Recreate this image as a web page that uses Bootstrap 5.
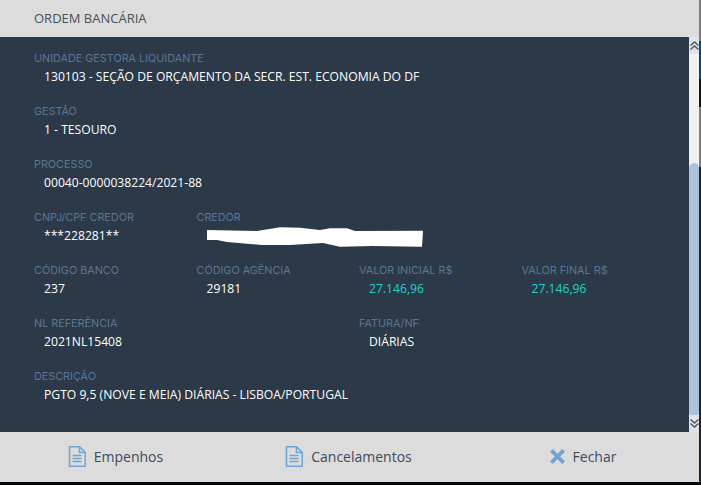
<!DOCTYPE html>
<html lang="pt-BR">
<head>
  <meta charset="UTF-8" />
  <meta name="viewport" content="width=device-width, initial-scale=1" />
  <title>Ordem Bancária</title>
  <link href="https://cdn.jsdelivr.net/npm/bootstrap@5.3.3/dist/css/bootstrap.min.css" rel="stylesheet" />
  <style>
  html, body { height: 100%; overflow: hidden; }
  body {
    background: #06090c;
    font-family: "Open Sans", "Liberation Sans", sans-serif;
  }
  .janela { width: 699px; height: 482px; background: #dcdcdc; }
  .faixa-direita {
    width: 2px; height: 482px;
    background: linear-gradient(#7d7d7d 0 41px, #0c4668 41px 79px, #101418 79px 107px, #7d7d7d 107px 167px, #1a2430 167px 485px);
  }
  .topo { height: 37px; padding-left: 34px; font-size: 13px; color: #4a4f57; }
  .miolo { height: 395px; }
  .conteudo { background: #2b3949; padding: 14px 5px 0 34px; }
  .campo { height: 53px; }
  .rotulo {
    font-family: "Inter", "Liberation Sans", sans-serif;
    font-size: 10.8px; line-height: 16px; color: #5d7694;
  }
  .valor { font-size: 12.15px; line-height: 18px; color: #fff; padding: 1px 0 0 10px; }
  .valor-teal { color: #22d3cb; }
  .risco { display: block; width: 217px; height: 20px; }
  .barra { width: 10px; background: #f1f1f1; }
  .barra-botao { height: 17px; background: #e0e4e9; }
  .barra-folga { height: 109px; }
  .barra-polegar { background: #adc3da; border-radius: 5px 5px 2px 2px; }
  .rodape { height: 50px; }
  .acao { font-size: 14px; color: #3f4a5b; gap: 8px; padding-bottom: 2px; }
  .acao-doc { padding-right: 2px; }
  .acao-fechar { padding-left: 1px; }
  </style>
</head>
<body>
  <div class="d-flex">
    <div class="janela d-flex flex-column">
      <!-- Título -->
      <div class="topo d-flex align-items-center">ORDEM BANCÁRIA</div>

      <div class="miolo d-flex">
        <div class="conteudo flex-grow-1">
          <div class="campo">
            <div class="rotulo">UNIDADE GESTORA LIQUIDANTE</div>
            <div class="valor">130103 - SEÇÃO DE ORÇAMENTO DA SECR. EST. ECONOMIA DO DF</div>
          </div>
          <div class="campo">
            <div class="rotulo">GESTÃO</div>
            <div class="valor">1 - TESOURO</div>
          </div>
          <div class="campo">
            <div class="rotulo">PROCESSO</div>
            <div class="valor">00040-0000038224/2021-88</div>
          </div>
          <div class="row g-0 campo">
            <div class="col-3">
              <div class="rotulo">CNPJ/CPF CREDOR</div>
              <div class="valor">***228281**</div>
            </div>
            <div class="col-9">
              <div class="rotulo">CREDOR</div>
              <div class="valor">
                <svg class="risco" viewBox="0 0 217 20"><path d="M0 3 50 4 73 .3 93 .7 113 3 123 1.3 140 1.3 148 4 216 3.7 215 19.7 165 19 133 19.7 116 16 83 18 55 18 20 15 10 13 0 13Z" fill="#fff"/></svg>
              </div>
            </div>
          </div>
          <div class="row g-0 campo">
            <div class="col-3">
              <div class="rotulo">CÓDIGO BANCO</div>
              <div class="valor">237</div>
            </div>
            <div class="col-3">
              <div class="rotulo">CÓDIGO AGÊNCIA</div>
              <div class="valor">29181</div>
            </div>
            <div class="col-3">
              <div class="rotulo">VALOR INICIAL R$</div>
              <div class="valor valor-teal">27.146,96</div>
            </div>
            <div class="col-3">
              <div class="rotulo">VALOR FINAL R$</div>
              <div class="valor valor-teal">27.146,96</div>
            </div>
          </div>
          <div class="row g-0 campo">
            <div class="col-6">
              <div class="rotulo">NL REFERÊNCIA</div>
              <div class="valor">2021NL15408</div>
            </div>
            <div class="col-6">
              <div class="rotulo">FATURA/NF</div>
              <div class="valor">DIÁRIAS</div>
            </div>
          </div>
          <div class="campo">
            <div class="rotulo">DESCRIÇÃO</div>
            <div class="valor">PGTO 9,5 (NOVE E MEIA) DIÁRIAS - LISBOA/PORTUGAL</div>
          </div>
        </div>

        <!-- barra de rolagem -->
        <div class="barra d-flex flex-column">
          <div class="barra-botao d-flex align-items-center justify-content-center">
            <svg width="9" height="9" viewBox="0 0 9 9" fill="none" stroke="#4a5563" stroke-width="1.4"><path d="M.5 4.5 4.5 1l4 3.5M.5 8.5 4.5 5l4 3.5"/></svg>
          </div>
          <div class="barra-folga"></div>
          <div class="barra-polegar flex-grow-1"></div>
          <div class="barra-botao d-flex align-items-center justify-content-center">
            <svg width="9" height="9" viewBox="0 0 9 9" fill="none" stroke="#4a5563" stroke-width="1.4"><path d="M.5.5 4.5 4l4-3.5M.5 4.5 4.5 8l4-3.5"/></svg>
          </div>
        </div>
      </div>

      <!-- Botões -->
      <div class="row g-0 rodape">
        <div class="col-4 d-flex align-items-center justify-content-center acao acao-doc">
          <svg width="18" height="21" viewBox="0 0 18 21" fill="none" stroke="#6ea5d6"><path d="M1.5.8h10l5.7 5.6v13.8H1.5z" stroke-width="1.5"/><path d="M11.5 1v5.4h5.5" stroke-width="1.5"/><path d="M4.5 9.5h9M4.5 12.5h9M4.5 15.5h9" stroke-width="1.6"/></svg>
          <span>Empenhos</span>
        </div>
        <div class="col-4 d-flex align-items-center justify-content-center acao acao-doc">
          <svg width="18" height="21" viewBox="0 0 18 21" fill="none" stroke="#6ea5d6"><path d="M1.5.8h10l5.7 5.6v13.8H1.5z" stroke-width="1.5"/><path d="M11.5 1v5.4h5.5" stroke-width="1.5"/><path d="M4.5 9.5h9M4.5 12.5h9M4.5 15.5h9" stroke-width="1.6"/></svg>
          <span>Cancelamentos</span>
        </div>
        <div class="col-4 d-flex align-items-center justify-content-center acao acao-fechar">
          <svg width="15" height="15" viewBox="0 0 15 15"><path d="M2 2 13 13M13 2 2 13" stroke="#6ea5d6" stroke-width="4.2" stroke-linecap="square" transform="translate(7.5 7.5) scale(.88) translate(-7.5 -7.5)"/></svg>
          <span>Fechar</span>
        </div>
      </div>
    </div>
    <div class="faixa-direita"></div>
  </div>

  <script src="https://cdn.jsdelivr.net/npm/bootstrap@5.3.3/dist/js/bootstrap.bundle.min.js"></script>
</body>
</html>
